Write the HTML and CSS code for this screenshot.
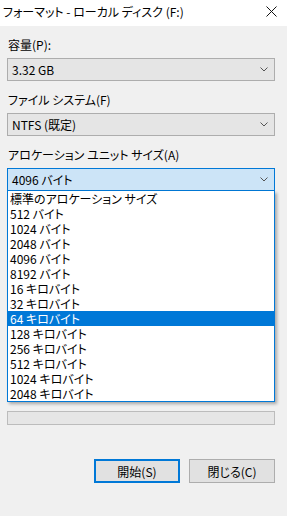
FILE: index.html
```html
<!DOCTYPE html>
<html lang="ja">
<head>
    <meta charset="UTF-8">
    <title>フォーマット - ローカル ディスク (F:)</title>
    <link rel="stylesheet" href="styles.css">
</head>
<body>
    <div class="titlebar">
        <span class="title">フォーマット - ローカル ディスク (F:)</span>
        <svg class="close" width="11" height="11" viewBox="0 0 11 11">
            <path d="M0.5 0.5 L10.5 10.5 M10.5 0.5 L0.5 10.5" stroke="#111" stroke-width="1" fill="none"/>
        </svg>
    </div>
    <div class="dialog">
        <div class="field-label">容量(P):</div>
        <div class="combo">
            <span>3.32 GB</span>
            <svg class="chevron" width="8" height="5" viewBox="0 0 8 5"><path d="M0.5 0.5 L4 4 L7.5 0.5" stroke="#555" fill="none"/></svg>
        </div>

        <div class="field-label">ファイル システム(F)</div>
        <div class="combo">
            <span>NTFS (既定)</span>
            <svg class="chevron" width="8" height="5" viewBox="0 0 8 5"><path d="M0.5 0.5 L4 4 L7.5 0.5" stroke="#555" fill="none"/></svg>
        </div>

        <div class="field-label">アロケーション ユニット サイズ(A)</div>
        <div class="combo-wrap">
            <div class="combo open">
                <span>4096 バイト</span>
                <svg class="chevron" width="8" height="5" viewBox="0 0 8 5"><path d="M0.5 0.5 L4 4 L7.5 0.5" stroke="#555" fill="none"/></svg>
            </div>
            <ul class="dropdown">
                <li>標準のアロケーション サイズ</li>
                <li>512 バイト</li>
                <li>1024 バイト</li>
                <li>2048 バイト</li>
                <li>4096 バイト</li>
                <li>8192 バイト</li>
                <li>16 キロバイト</li>
                <li>32 キロバイト</li>
                <li class="selected">64 キロバイト</li>
                <li>128 キロバイト</li>
                <li>256 キロバイト</li>
                <li>512 キロバイト</li>
                <li>1024 キロバイト</li>
                <li>2048 キロバイト</li>
            </ul>
        </div>

        <div class="progress"></div>

        <div class="actions">
            <button class="btn default">開始(S)</button>
            <button class="btn">閉じる(C)</button>
        </div>
    </div>
</body>
</html>
```
FILE: styles.css
```css
body {
    margin: 0;
    width: 287px;
    height: 516px;
    background-color: #f0f0f0;
    font-family: "Noto Sans CJK JP", "Noto Sans", sans-serif;
    font-size: 12px;
    font-feature-settings: "palt";
    color: #000000;
    overflow: hidden;
}
.titlebar {
    height: 26px;
    background-color: #ffffff;
    display: flex;
    align-items: center;
    justify-content: space-between;
    padding: 0 10px 0 3px;
}
.title {
    line-height: 18px;
    margin-top: -2px;
}
.close {
    margin-top: -4px;
}
.dialog {
    padding: 10px 12px 0 7px;
}
.field-label {
    line-height: 18px;
    padding-left: 1px;
    margin-bottom: 4px;
}
.combo {
    height: 21px;
    border: 1px solid #adadad;
    background-color: #e5e5e5;
    display: flex;
    align-items: center;
    justify-content: space-between;
    padding: 0 5px 0 4px;
    margin-bottom: 10px;
}
.combo.open {
    border-color: #0078d7;
    background-color: #cce4f7;
    margin-bottom: 0;
}
.chevron {
    margin-right: 1px;
}
.combo-wrap {
    position: relative;
}
.dropdown {
    position: absolute;
    top: 100%;
    left: 0;
    right: 0;
    margin: 0;
    padding: 0;
    list-style: none;
    background-color: #ffffff;
    border: 1px solid #0078d7;
    border-top: none;
    box-shadow: 2px 2px 3px rgba(0, 0, 0, 0.3);
}
.dropdown li {
    height: 15px;
    line-height: 15px;
    padding-left: 2px;
}
.dropdown li.selected {
    background-color: #0078d7;
    color: #ffffff;
}
.progress {
    margin-top: 220px;
    height: 12px;
    border: 1px solid #bcbcbc;
    background-color: #e6e6e6;
}
.actions {
    display: flex;
    justify-content: flex-end;
    gap: 9px;
    margin-top: 34px;
}
.btn {
    width: 86px;
    height: 24px;
    border: 1px solid #adadad;
    background-color: #e1e1e1;
    font-family: inherit;
    font-size: 12px;
    font-feature-settings: "palt";
    padding: 0;
    color: #000000;
}
.btn.default {
    border: 2px solid #0078d7;
}
```
